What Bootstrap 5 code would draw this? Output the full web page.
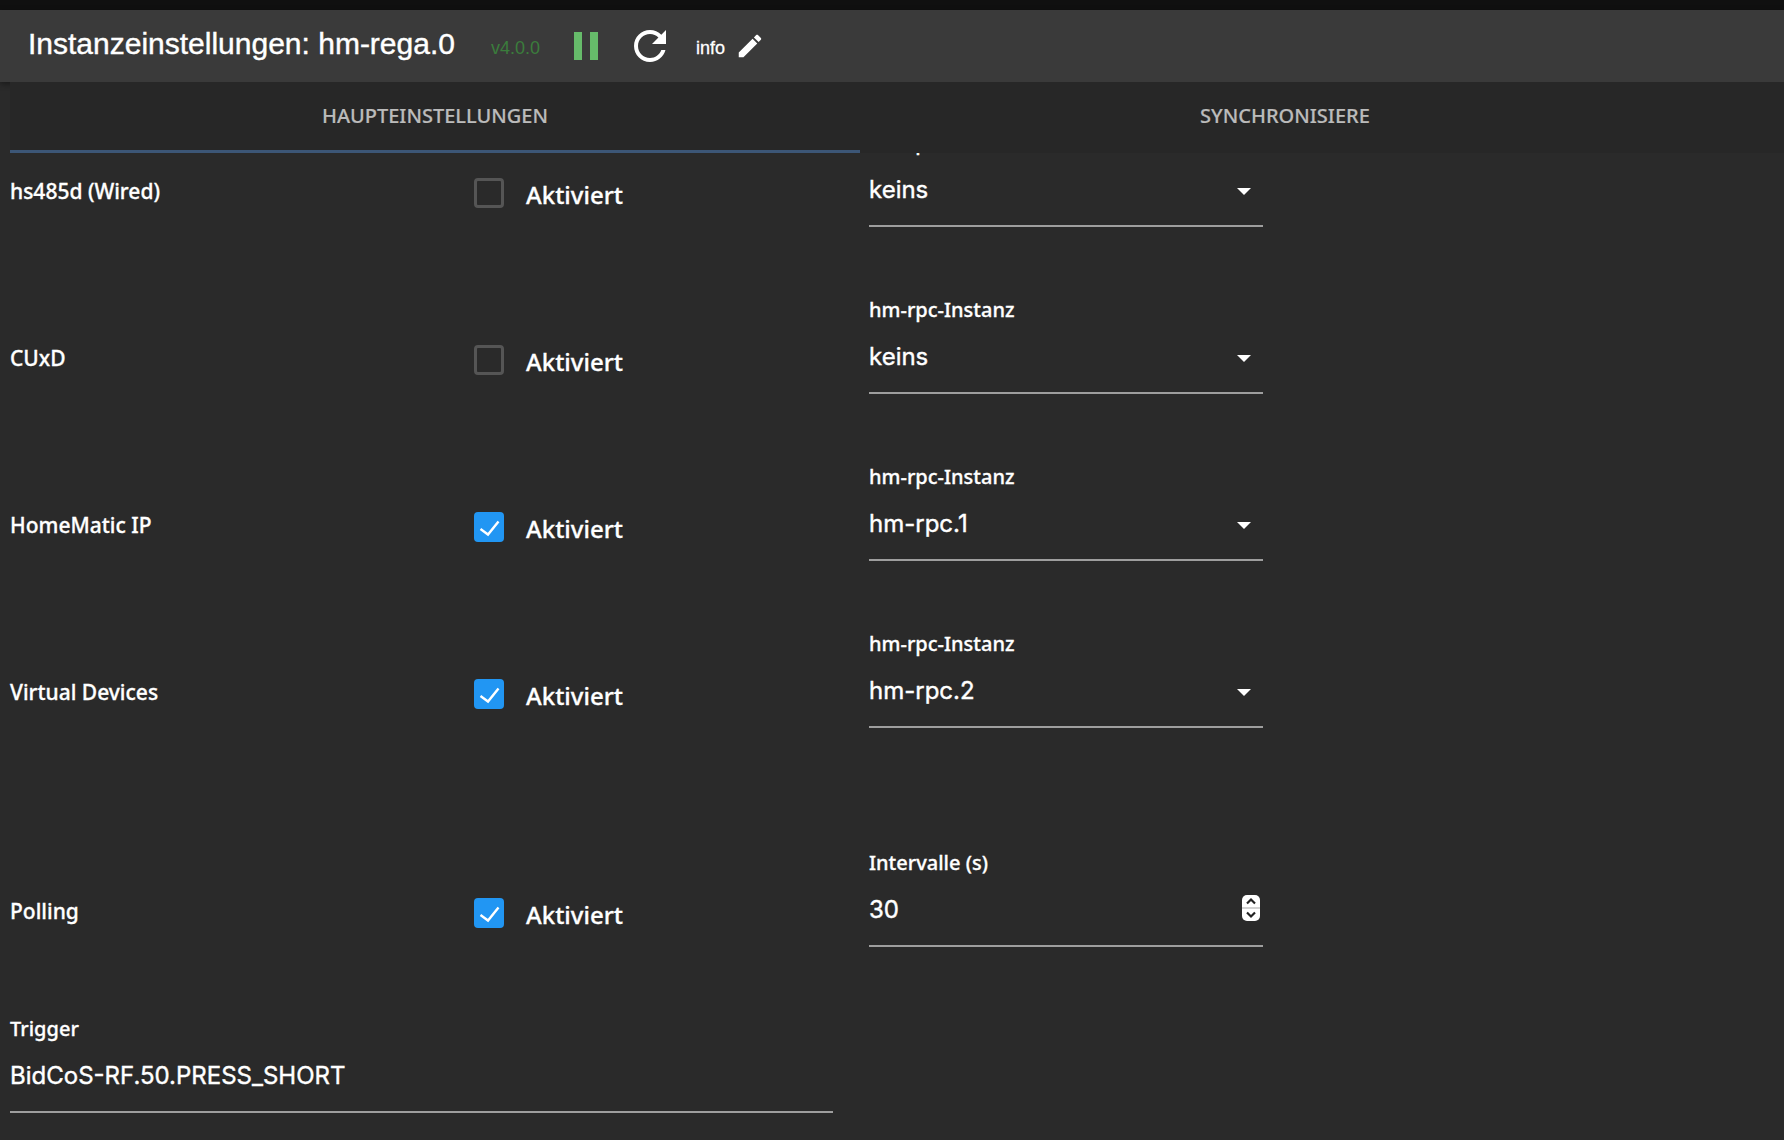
<!DOCTYPE html>
<html lang="de" data-bs-theme="dark">
<head>
<meta charset="utf-8">
<meta name="viewport" content="width=device-width, initial-scale=1">
<title>Instanzeinstellungen: hm-rega.0</title>
<link href="https://cdn.jsdelivr.net/npm/bootstrap@5.3.0/dist/css/bootstrap.min.css" rel="stylesheet">
<style>
  body { background: #2a2a2a; color: #fff; font-family: "Noto Sans", sans-serif; font-weight: 500; }
  .top-strip { height: 10px; background: #101010; }
  .app-head { height: 72px; padding: 0 28px; background: #3a3a3a; box-shadow: 0 2px 6px rgba(0,0,0,.4); font-family: "Liberation Sans", sans-serif; }
  .app-title { font-size: 30px; line-height: 40px; margin: 0 36px 4px 0; font-weight: 400; -webkit-text-stroke: .4px #fff; }
  .version { font-size: 18px; line-height: 24px; padding-top: 4px; color: #3a7d3c; margin-right: 22px; }
  .icon-btn { background: none; border: 0; padding: 0; display: flex; color: #fff; }
  .icon-btn svg { fill: currentColor; }
  .icon-pause { color: #66bb6a; margin-right: 16px; }
  .icon-refresh { margin-right: 22px; }
  .log-level { font-size: 18px; line-height: 24px; padding-top: 4px; margin-right: 10px; -webkit-text-stroke: .3px #fff; }
  .tab-bar { margin-left: 10px; background: #272727; flex-wrap: nowrap; overflow: hidden; z-index: 2; border: 0; }
  .tab-bar .nav-item { flex: 0 0 47.914%; }
  .tab-bar .nav-link { width: 100%; height: 71px; padding: 0; margin: 0; border: 0; border-bottom: 3px solid transparent; border-radius: 0; background: none; color: #bbb; font-size: 20px; font-weight: 500; text-transform: uppercase; -webkit-text-stroke: .2px #bbb; }
  .tab-bar .nav-link.active { color: #bbb; background: none; border-color: #3c5676; }
  .scroll-area { min-height: 0; padding-left: 10px; -webkit-text-stroke: .3px #fff; }
  .scrolled { margin-top: -93px; }
  .set-row { display: grid; grid-template-columns: 464fr 395fr 394fr 521fr; align-items: end; height: 167px; }
  .poll-row { margin-top: 52px; }
  .trigger-row { grid-template-columns: 823fr 951fr; height: 166px; }
  .row-name { font-size: 21px; line-height: 30px; padding-bottom: 21px; }
  .tick { gap: 22px; padding-bottom: 17px; }
  .tick input { appearance: none; flex: none; width: 30px; height: 30px; margin: 0; border: 3px solid #555; border-radius: 4px; background: none; }
  .tick input:checked { border: 0; background: #2196f3 url("data:image/svg+xml,%3Csvg xmlns='http://www.w3.org/2000/svg' viewBox='0 0 30 30'%3E%3Cpath d='M6.500 17l7.500 5.500L24.500 9.500' fill='none' stroke='white' stroke-width='2.400'/%3E%3C/svg%3E"); }
  .tick label { font-size: 24px; line-height: 30px; padding-top: 2px; }
  .field { position: relative; display: flex; flex-direction: column; }
  .field label { font-size: 20px; line-height: 24px; margin-bottom: 2px; }
  .field select, .field input { width: 100%; height: 70px; padding: 0 0 4px; margin: 0; border: 0; border-bottom: 2px solid #9e9e9e; border-radius: 0; outline: 0; background: none; color: #fff; font: 400 24px Inter, sans-serif; appearance: none; -webkit-text-stroke: .4px #fff; }
  .field select { background: url("data:image/svg+xml,%3Csvg xmlns='http://www.w3.org/2000/svg' viewBox='0 0 14 7'%3E%3Cpath d='M0 0h14L7 7z' fill='white'/%3E%3C/svg%3E") right 12px center / 14px 7px no-repeat; }
  .field input[type=number] { appearance: textfield; }
  .field input::-webkit-inner-spin-button { display: none; }
  .stepper { position: absolute; right: 3px; bottom: 26px; }
</style>
<script src="https://cdn.jsdelivr.net/npm/bootstrap@5.3.0/dist/js/bootstrap.bundle.min.js"></script>
</head>
<body class="vh-100 overflow-hidden d-flex flex-column">
<div class="top-strip flex-shrink-0"></div>
<header class="app-head d-flex align-items-center flex-shrink-0">
  <h1 class="app-title">Instanzeinstellungen: hm-rega.0</h1>
  <span class="version">v4.0.0</span>
  <button class="icon-btn icon-pause" aria-label="Pause"><svg width="48" height="48" viewBox="0 0 24 24"><path d="M6 19h4V5H6v14zm8-14v14h4V5h-4z"/></svg></button>
  <button class="icon-btn icon-refresh" aria-label="Neu starten"><svg width="48" height="48" viewBox="0 0 24 24"><path d="M17.650 6.350C16.200 4.900 14.210 4 12 4c-4.420 0-7.990 3.580-7.990 8s3.570 8 7.990 8c3.730 0 6.840-2.550 7.730-6h-2.080c-.820 2.330-3.040 4-5.650 4-3.310 0-6-2.690-6-6s2.690-6 6-6c1.660 0 3.140.690 4.220 1.780L13 11h7V4l-2.350 2.350z"/></svg></button>
  <span class="log-level">info</span>
  <button class="icon-btn" aria-label="Bearbeiten"><svg width="30" height="30" viewBox="0 0 24 24"><path d="M3 17.250V21h3.750L17.810 9.940l-3.750-3.750L3 17.250zM20.710 7.040c.390-.390.390-1.020 0-1.410l-2.340-2.340c-.390-.390-1.020-.390-1.410 0l-1.830 1.830 3.750 3.750 1.830-1.830z"/></svg></button>
</header>
<ul class="nav nav-tabs tab-bar position-relative flex-shrink-0">
  <li class="nav-item"><button class="nav-link active">Haupteinstellungen</button></li>
  <li class="nav-item"><button class="nav-link">Synchronisiere</button></li>
</ul>
<main class="scroll-area flex-grow-1 overflow-hidden">
  <form class="scrolled">
    <div class="set-row">
      <div class="row-name">hs485d (Wired)</div>
      <div class="tick d-flex"><input type="checkbox" id="en1"><label for="en1">Aktiviert</label></div>
      <div class="field"><label for="in1">hm-rpc-Instanz</label><select id="in1"><option>keins</option></select></div>
    </div>
    <div class="set-row">
      <div class="row-name">CUxD</div>
      <div class="tick d-flex"><input type="checkbox" id="en2"><label for="en2">Aktiviert</label></div>
      <div class="field"><label for="in2">hm-rpc-Instanz</label><select id="in2"><option>keins</option></select></div>
    </div>
    <div class="set-row">
      <div class="row-name">HomeMatic IP</div>
      <div class="tick d-flex"><input type="checkbox" id="en3" checked><label for="en3">Aktiviert</label></div>
      <div class="field"><label for="in3">hm-rpc-Instanz</label><select id="in3"><option>hm-rpc.1</option></select></div>
    </div>
    <div class="set-row">
      <div class="row-name">Virtual Devices</div>
      <div class="tick d-flex"><input type="checkbox" id="en4" checked><label for="en4">Aktiviert</label></div>
      <div class="field"><label for="in4">hm-rpc-Instanz</label><select id="in4"><option>hm-rpc.2</option></select></div>
    </div>
    <div class="set-row poll-row">
      <div class="row-name">Polling</div>
      <div class="tick d-flex"><input type="checkbox" id="en5" checked><label for="en5">Aktiviert</label></div>
      <div class="field"><label for="iv">Intervalle (s)</label><input type="number" id="iv" value="30">
        <svg class="stepper" width="18" height="26" viewBox="0 0 18 26"><rect width="18" height="26" rx="5" fill="#fff"/><path d="M0 13h18" stroke="#d2d2d2" stroke-width="2"/><path d="M5 8.500l4-4 4 4M5 17.500l4 4 4-4" fill="none" stroke="#222" stroke-width="2.200"/></svg>
      </div>
    </div>
    <div class="set-row trigger-row">
      <div class="field"><label for="tr">Trigger</label><input type="text" id="tr" value="BidCoS-RF.50.PRESS_SHORT"></div>
    </div>
  </form>
</main>
</body>
</html>
